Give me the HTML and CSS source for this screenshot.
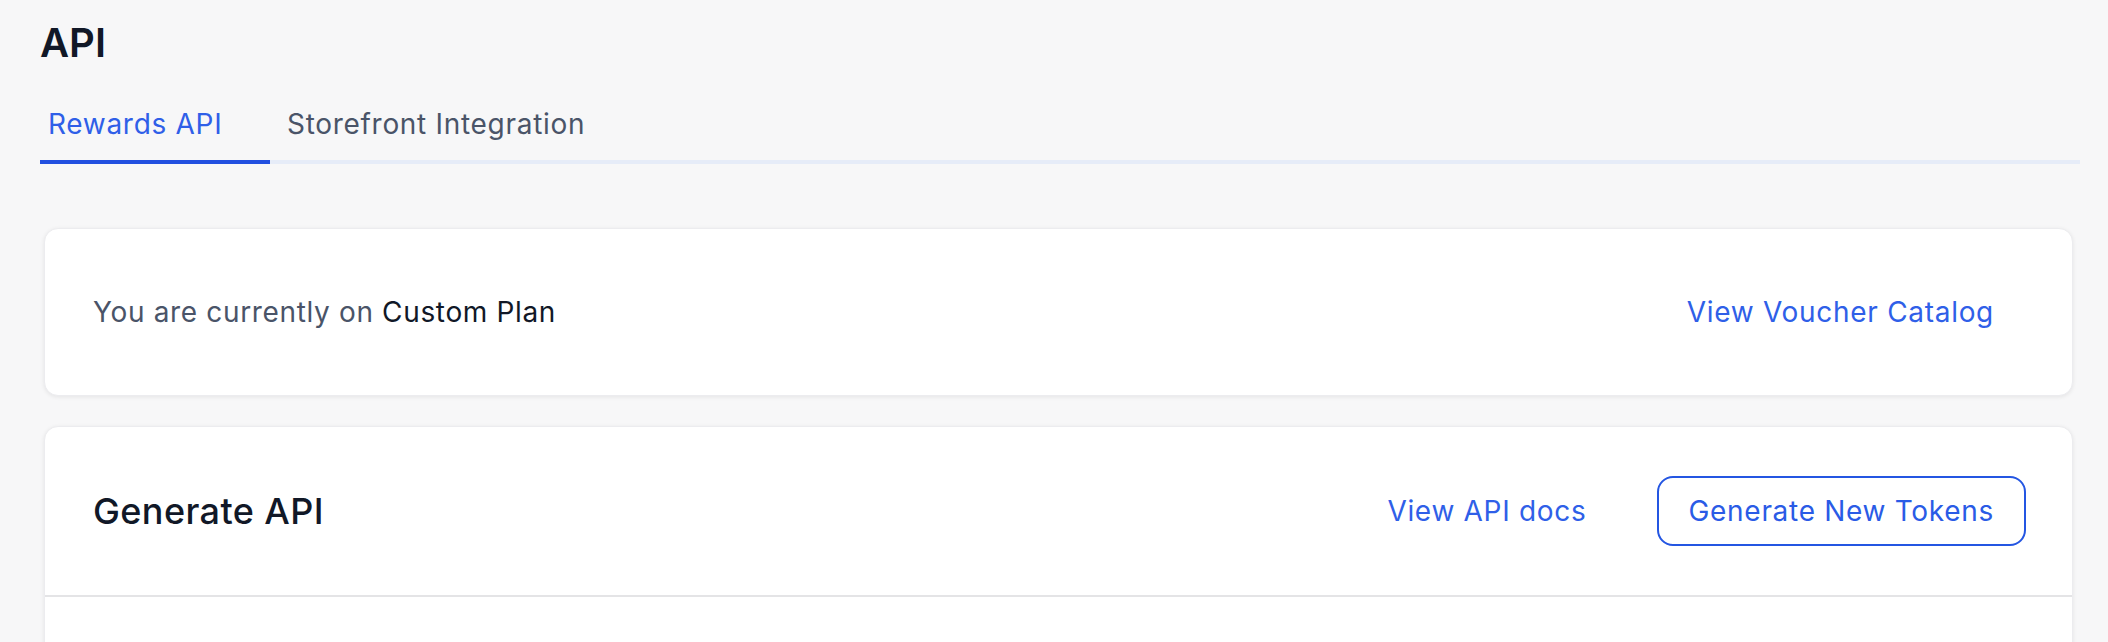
FILE: index.html
```html
<!DOCTYPE html>
<html lang="en">
<head>
    <meta charset="UTF-8">
    <meta name="viewport" content="width=device-width, initial-scale=1.0">
    <title>API</title>
    <link rel="stylesheet" href="styles.css">
</head>
<body>

<h1 class="page-title">API</h1>

<nav class="tabs">
    <a class="tab active" href="#">Rewards API</a>
    <a class="tab" href="#">Storefront Integration</a>
</nav>

<section class="card plan-card">
    <p class="plan-text">You are currently on <span class="plan-name">Custom Plan</span></p>
    <a class="btn btn-ghost" href="#">View Voucher Catalog</a>
</section>

<section class="card">
    <div class="card-header">
        <h2 class="card-title">Generate API</h2>
        <div class="actions">
            <a class="btn btn-ghost" href="#">View API docs</a>
            <button class="btn btn-outline">Generate New Tokens</button>
        </div>
    </div>
    <div class="card-body"></div>
</section>

</body>
</html>
```

FILE: styles.css
```css
body {
    font-family: Inter, "Noto Sans", sans-serif;
    background-color: #f7f7f8;
    color: #111827;
    margin: 0;
    padding: 19px 35px 0 44px;
}

.page-title {
    font-size: 40px;
    line-height: 48px;
    font-weight: 600;
    margin: 0 0 0 -4px;
    color: #111827;
}

.tabs {
    display: flex;
    gap: 9px;
    margin: 21px -7px 64px -4px;
    border-bottom: 4px solid #e6ecf8;
}

.tab {
    padding: 16px 8px 16px;
    margin-bottom: -4px;
    border-bottom: 4px solid transparent;
    font-size: 28px;
    line-height: 40px;
    font-weight: 400;
    letter-spacing: 0.7px;
    color: #4a5468;
    text-decoration: none;
}

.tab.active {
    min-width: 214px;
    color: #2f5fe8;
    border-bottom-color: #2250e0;
}

/* tarjetas */
.card {
    background-color: #fff;
    border: 1px solid #ececef;
    border-radius: 14px;
    box-shadow: 0 1px 4px rgba(0, 0, 0, 0.08);
    margin-bottom: 30px;
}

.plan-card {
    display: flex;
    justify-content: space-between;
    align-items: center;
    padding: 48px 46px 48px 48px;
}

.plan-text {
    margin: 0;
    font-size: 28px;
    line-height: 40px;
    letter-spacing: 0.65px;
    color: #4a5468;
}

.plan-name {
    color: #111827;
}

.btn {
    display: inline-block;
    font-family: inherit;
    font-size: 28px;
    line-height: 34px;
    font-weight: 400;
    letter-spacing: 0.7px;
    padding: 16px 30px;
    border: 2px solid transparent;
    border-radius: 16px;
    color: #2f5fe8;
    background: none;
    text-decoration: none;
    cursor: pointer;
}

.btn-outline {
    border-color: #2456e2;
    color: #2a5be6;
}

.card-header {
    display: flex;
    justify-content: space-between;
    align-items: center;
    padding: 49px 46px 49px 48px;
    border-bottom: 2px solid #e4e4e6;
}

.card-title {
    margin: 0;
    font-size: 36px;
    line-height: 44px;
    font-weight: 500;
    letter-spacing: 0.4px;
    color: #111827;
}

.actions {
    display: flex;
    align-items: center;
    gap: 38px;
}

.card-body {
    height: 200px;
}
```
